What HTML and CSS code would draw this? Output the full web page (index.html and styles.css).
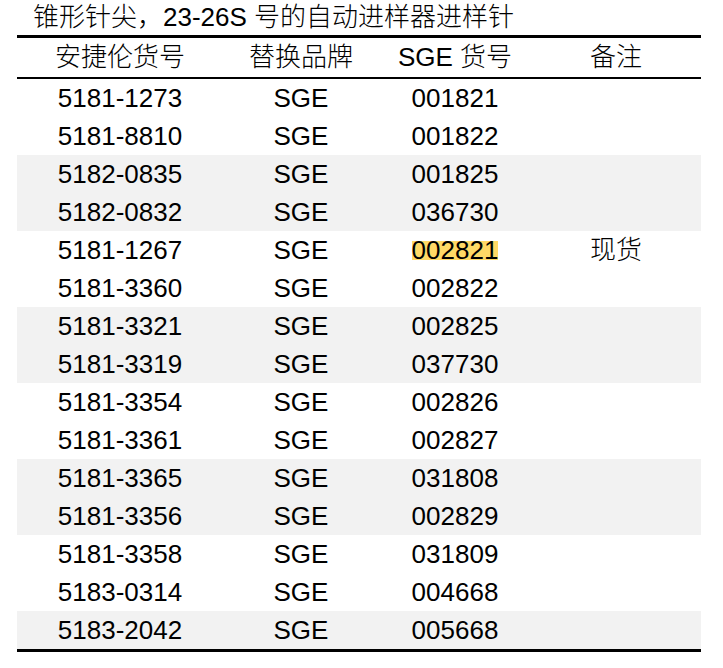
FILE: index.html
```html
<!DOCTYPE html>
<html lang="zh-CN">
<head>
<meta charset="utf-8">
<title>锥形针尖</title>
<link rel="stylesheet" href="styles.css">
</head>
<body>
<div class="title">锥形针尖，23-26S 号的自动进样器进样针</div>
<table class="parts">
  <thead>
    <tr><th>安捷伦货号</th><th>替换品牌</th><th>SGE 货号</th><th>备注</th></tr>
  </thead>
  <tbody>
    <tr><td>5181-1273</td><td>SGE</td><td>001821</td><td></td></tr>
    <tr><td>5181-8810</td><td>SGE</td><td>001822</td><td></td></tr>
    <tr class="shade"><td>5182-0835</td><td>SGE</td><td>001825</td><td></td></tr>
    <tr class="shade"><td>5182-0832</td><td>SGE</td><td>036730</td><td></td></tr>
    <tr><td>5181-1267</td><td>SGE</td><td><span class="mark">002821</span></td><td class="note">现货</td></tr>
    <tr><td>5181-3360</td><td>SGE</td><td>002822</td><td></td></tr>
    <tr class="shade"><td>5181-3321</td><td>SGE</td><td>002825</td><td></td></tr>
    <tr class="shade"><td>5181-3319</td><td>SGE</td><td>037730</td><td></td></tr>
    <tr><td>5181-3354</td><td>SGE</td><td>002826</td><td></td></tr>
    <tr><td>5181-3361</td><td>SGE</td><td>002827</td><td></td></tr>
    <tr class="shade"><td>5181-3365</td><td>SGE</td><td>031808</td><td></td></tr>
    <tr class="shade"><td>5181-3356</td><td>SGE</td><td>002829</td><td></td></tr>
    <tr><td>5181-3358</td><td>SGE</td><td>031809</td><td></td></tr>
    <tr><td>5183-0314</td><td>SGE</td><td>004668</td><td></td></tr>
    <tr class="shade"><td>5183-2042</td><td>SGE</td><td>005668</td><td></td></tr>
  </tbody>
</table>
</body>
</html>
```
FILE: styles.css
```css
html, body {
  margin: 0;
  padding: 0;
  background: #ffffff;
}
body {
  font-family: "Liberation Sans", Arial, "Noto Sans CJK SC", sans-serif;
  color: #000000;
  font-size: 26px;
}
.title {
  height: 35px;
  line-height: 35px;
  padding-left: 33px;
  white-space: nowrap;
  font-weight: 300;
}
.parts {
  margin-left: 17px;
  width: 684px;
  border-collapse: separate;
  border-spacing: 0;
  border-top: 3px solid #000;
  border-bottom: 3px solid #000;
  table-layout: fixed;
}
.parts th,
.parts td {
  padding: 0;
  text-align: center;
  font-weight: normal;
  white-space: nowrap;
}
.parts th {
  height: 39px;
  line-height: 39px;
  border-bottom: 2px solid #000;
  font-weight: 300;
}
.parts td {
  height: 38px;
  line-height: 38px;
}
.parts td.note {
  font-weight: 300;
}
.parts th:nth-child(1) { width: 206px; }
.parts th:nth-child(2) { width: 156px; }
.parts th:nth-child(3) { width: 152px; }
.parts th:nth-child(4) { width: 170px; }
.parts tr.shade td {
  background: #f2f2f2;
}
.mark {
  display: inline-block;
  height: 19px;
  line-height: 19px;
  vertical-align: 0;
  background: #ffd966;
}
```
